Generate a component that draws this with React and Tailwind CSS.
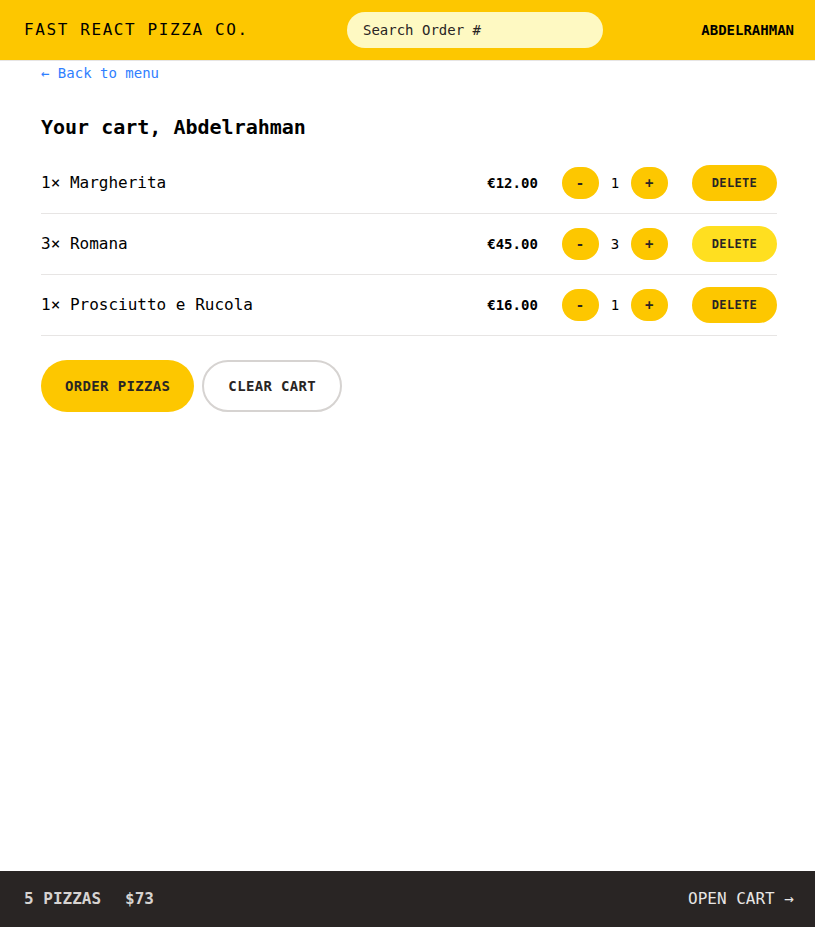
import React from 'react';

const items = [
  { id: 1, qty: 1, name: 'Margherita', price: '€12.00', hover: false },
  { id: 2, qty: 3, name: 'Romana', price: '€45.00', hover: true },
  { id: 3, qty: 1, name: 'Prosciutto e Rucola', price: '€16.00', hover: false },
];

function RoundButton({ children }) {
  return (
    <button className="inline-block rounded-full bg-[#fdc700] px-3.5 py-1.5 text-sm font-semibold uppercase tracking-wide text-stone-800">
      {children}
    </button>
  );
}

function CartItem({ item }) {
  return (
    <li className="flex items-center justify-between py-3">
      <p>
        {item.qty}&times; {item.name}
      </p>
      <div className="flex items-center gap-6">
        <p className="text-sm font-bold">{item.price}</p>
        <div className="flex items-center gap-3">
          <RoundButton>-</RoundButton>
          <span className="text-sm font-medium">{item.qty}</span>
          <RoundButton>+</RoundButton>
        </div>
        <button
          className={
            'inline-block rounded-full px-5 py-2.5 text-xs font-semibold uppercase tracking-wide text-stone-800 ' +
            (item.hover ? 'bg-[#ffdf20]' : 'bg-[#fdc700]')
          }
        >
          Delete
        </button>
      </div>
    </li>
  );
}

export default function App() {
  return (
    <div className="grid h-screen grid-rows-[auto_1fr_auto] font-['DejaVu_Sans_Mono',monospace] text-stone-800">
      {/* Header */}
      <header className="flex items-center justify-between border-b border-stone-200 bg-[#fdc700] py-3 pl-6 pr-[21px] uppercase">
        <span className="tracking-widest text-black">Fast React Pizza Co.</span>
        <input
          placeholder="Search Order #"
          className="w-64 rounded-full bg-[#fef9c2] px-4 py-2 text-sm placeholder:text-stone-800 focus:outline-none"
        />
        <span className="text-sm font-semibold text-black">Abdelrahman</span>
      </header>

      {/* Cart */}
      <div className="overflow-hidden">
        <main className="pl-[41px] pr-[38px]">
          <div>
            <a href="#" className="text-sm text-[#3080ff]">
              &larr; Back to menu
            </a>
            <h2 className="mt-7 text-xl font-semibold text-black">Your cart, Abdelrahman</h2>
            <ul className="mt-3 divide-y divide-stone-200 border-b border-stone-200 text-black">
              {items.map((item) => (
                <CartItem key={item.id} item={item} />
              ))}
            </ul>
            <div className="mt-6 space-x-2">
              <button className="inline-block rounded-full bg-[#fdc700] px-6 py-4 text-sm font-semibold uppercase tracking-wide text-stone-800">
                Order pizzas
              </button>
              <button className="inline-block rounded-full border-2 border-stone-300 px-6 py-3.5 text-sm font-semibold uppercase tracking-wide text-stone-800">
                Clear cart
              </button>
            </div>
          </div>
        </main>
      </div>

      {/* Cart overview */}
      <div className="flex items-center justify-between bg-stone-800 py-4 pl-6 pr-[21px] text-base uppercase text-stone-200">
        <p className="space-x-6 font-semibold text-stone-300">
          <span>5 pizzas</span>
          <span>$73</span>
        </p>
        <a href="#">Open cart &rarr;</a>
      </div>
    </div>
  );
}
